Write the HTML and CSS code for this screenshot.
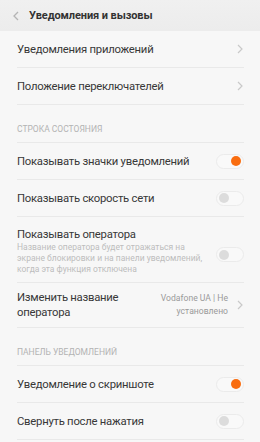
FILE: index.html
```html
<!DOCTYPE html>
<html lang="ru">
<head>
<meta charset="utf-8">
<link rel="stylesheet" href="styles.css">
</head>
<body>
<div class="screen">
  <header class="topbar">
    <svg class="back" width="8" height="10" viewBox="0 0 8 10"><path d="M6 1 L2 5 L6 9" fill="none" stroke="#b4b4b4" stroke-width="1.3"/></svg>
    <span class="title">Уведомления и вызовы</span>
  </header>

  <div class="row">
    <span class="label">Уведомления приложений</span>
    <svg class="chev" width="6" height="10" viewBox="0 0 6 10"><path d="M1 1 L5 5 L1 9" fill="none" stroke="#c9c9c9" stroke-width="1.2"/></svg>
  </div>
  <div class="row">
    <span class="label">Положение переключателей</span>
    <svg class="chev" width="6" height="10" viewBox="0 0 6 10"><path d="M1 1 L5 5 L1 9" fill="none" stroke="#c9c9c9" stroke-width="1.2"/></svg>
  </div>

  <div class="section">СТРОКА СОСТОЯНИЯ</div>
  <div class="row">
    <span class="label">Показывать значки уведомлений</span>
    <span class="toggle on"><span class="knob"></span></span>
  </div>
  <div class="row">
    <span class="label">Показывать скорость сети</span>
    <span class="toggle"><span class="knob"></span></span>
  </div>
  <div class="row tall">
    <div class="text">
      <div class="label">Показывать оператора</div>
      <div class="desc">Название оператора будет отражаться на экране блокировки и на панели уведомлений, когда эта функция отключена</div>
    </div>
    <span class="toggle"><span class="knob"></span></span>
  </div>
  <div class="row two">
    <div class="label">Изменить название<br>оператора</div>
    <div class="value">Vodafone UA | Не<br>установлено</div>
    <svg class="chev" width="6" height="10" viewBox="0 0 6 10"><path d="M1 1 L5 5 L1 9" fill="none" stroke="#c9c9c9" stroke-width="1.2"/></svg>
  </div>

  <div class="section">ПАНЕЛЬ УВЕДОМЛЕНИЙ</div>
  <div class="row">
    <span class="label">Уведомление о скриншоте</span>
    <span class="toggle on"><span class="knob"></span></span>
  </div>
  <div class="row">
    <span class="label">Свернуть после нажатия</span>
    <span class="toggle"><span class="knob"></span></span>
  </div>
</div>
</body>
</html>
```

FILE: styles.css
```css
html, body {
  margin: 0;
  padding: 0;
  background: #f7f7f7;
}
.screen {
  width: 260px;
  height: 442px;
  overflow: hidden;
  background: #f7f7f7;
  font-family: Roboto, "Noto Sans", sans-serif;
  color: #3a3a3a;
}
.topbar {
  height: 31px;
  display: flex;
  align-items: center;
  padding-left: 12px;
  background: linear-gradient(#f0f0f0, #ececec);
  box-sizing: border-box;
}
.back {
  margin-right: 9px;
}
.title {
  font-size: 11px;
  font-weight: bold;
  letter-spacing: -0.1px;
  color: #333;
}
.row {
  display: flex;
  align-items: center;
  height: 37px;
  margin: 0 16px 0 17px;
  border-bottom: 1px solid #e9e9e9;
  box-sizing: border-box;
}
.label {
  flex: 1;
  font-size: 11.3px;
  letter-spacing: -0.25px;
  color: #383838;
}
.chev {
  margin-right: 1px;
}
.section {
  margin: 0 16px 0 17px;
  height: 38px;
  box-sizing: border-box;
  padding-top: 19px;
  font-size: 8.5px;
  color: #b3b3b3;
  border-bottom: 1px solid #e9e9e9;
}
.toggle {
  flex: none;
  width: 28px;
  height: 15px;
  border-radius: 8px;
  background: #f9f9f9;
  border: 1px solid #ebebeb;
  box-sizing: border-box;
  display: flex;
  align-items: center;
  padding: 0 2px;
}
.knob {
  width: 10px;
  height: 10px;
  border-radius: 50%;
  background: #dcdcdc;
}
.toggle.on {
  justify-content: flex-end;
}
.toggle.on .knob {
  background: #f96d10;
}
.row.tall {
  height: 66px;
  align-items: flex-start;
  padding-top: 11px;
}
.row.tall .toggle {
  margin-top: 19px;
}
.text {
  flex: 1;
}
.desc {
  width: 196px;
  font-size: 8.5px;
  line-height: 11px;
  color: #bdbdbd;
  margin-top: 1px;
}
.row.two {
  height: 45px;
}
.row.two .label {
  line-height: 15px;
}
.value {
  font-size: 8.6px;
  line-height: 13px;
  color: #9a9a9a;
  text-align: right;
  margin-right: 9px;
}
```
